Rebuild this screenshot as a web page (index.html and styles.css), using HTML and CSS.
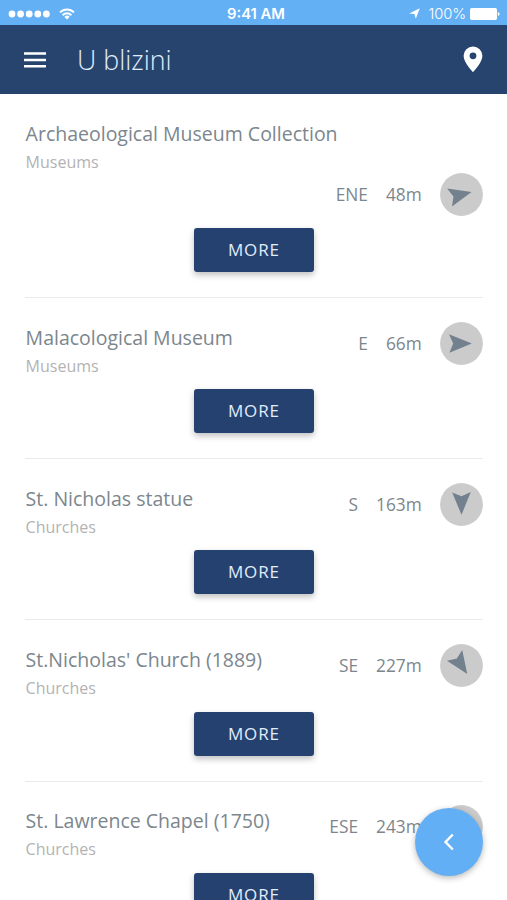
FILE: index.html
```html
<!DOCTYPE html>
<html lang="hr">
<head>
<meta charset="utf-8">
<title>U blizini</title>
<link rel="stylesheet" href="styles.css">
</head>
<body>
<div class="status">
  <div class="status-side">
    <svg class="signal" width="43" height="10" viewBox="0 0 43 10"><g fill="#fff"><circle cx="4" cy="5" r="3.4"/><circle cx="12.6" cy="5" r="3.4"/><circle cx="21.2" cy="5" r="3.4"/><circle cx="29.8" cy="5" r="3.4"/><circle cx="38.4" cy="5" r="3.4"/></g></svg>
    <svg class="wifi" width="16" height="12" viewBox="0 0 16 12"><g fill="none" stroke="#fff" stroke-width="2"><path d="M1.1 4.4a9.8 9.8 0 0 1 13.8 0"/><path d="M3.6 7.2a6.2 6.2 0 0 1 8.8 0"/></g><path fill="#fff" d="M5.4 8.9a3.7 3.7 0 0 1 5.2 0L8 11.6z"/></svg>
  </div>
  <div class="clock">9:41 AM</div>
  <div class="status-side status-right">
    <svg class="loc" width="11" height="11" viewBox="0 0 11 11"><path fill="#fff" d="M10.8.3 6.800 10.800 5.400 6.100.2 5.400z"/></svg>
    <span class="percent">100%</span>
    <svg width="30" height="12" viewBox="0 0 30 12"><rect width="27" height="12" rx="1.8" fill="#fff"/><path fill="#fff" d="M27.8 4q1.8.3 1.8 2t-1.8 2z"/></svg>
  </div>
</div>
<header class="bar">
  <svg width="22" height="16" viewBox="0 0 22 16"><path d="M0 1.5h22M0 8h22M0 14.3h22" stroke="#fff" stroke-width="2.5"/></svg>
  <h1>U blizini</h1>
  <svg width="20" height="27" viewBox="0 0 20 27"><path fill="#fff" fill-rule="evenodd" d="M10 .4A9.4 9.4 0 0 0 .6 9.8C.6 16.9 10 26.2 10 26.2s9.400-9.300 9.400-16.400A9.400 9.400 0 0 0 10 .4zm0 6a3.400 3.400 0 1 1 0 6.800 3.400 3.400 0 0 1 0-6.800z"/></svg>
</header>
<main class="list">
  <article class="item">
    <div class="head wrap">
      <div class="place"><h2>Archaeological Museum Collection</h2><p>Museums</p></div>
      <div class="info"><span class="dir">ENE</span><span class="dist">48m</span><svg class="compass" viewBox="-21.500 -21.500 43 43"><circle r="21.400"/><path class="ene" d="M10.300 0-12.500-9.300-8.300 0-12.100 9.300z"/></svg></div>
    </div>
    <button class="more">MORE</button>
  </article>
  <article class="item">
    <div class="head">
      <div class="place"><h2>Malacological Museum</h2><p>Museums</p></div>
      <div class="info"><span class="dir">E</span><span class="dist">66m</span><svg class="compass" viewBox="-21.500 -21.500 43 43"><circle r="21.400"/><path d="M10.300 0-12.500-9.300-8.300 0-12.100 9.300z"/></svg></div>
    </div>
    <button class="more">MORE</button>
  </article>
  <article class="item">
    <div class="head">
      <div class="place"><h2>St. Nicholas statue</h2><p>Churches</p></div>
      <div class="info"><span class="dir">S</span><span class="dist">163m</span><svg class="compass" viewBox="-21.500 -21.500 43 43"><circle r="21.400"/><path class="s" d="M10.300 0-12.500-9.300-8.300 0-12.100 9.300z"/></svg></div>
    </div>
    <button class="more">MORE</button>
  </article>
  <article class="item">
    <div class="head">
      <div class="place"><h2>St.Nicholas' Church (1889)</h2><p>Churches</p></div>
      <div class="info"><span class="dir">SE</span><span class="dist">227m</span><svg class="compass" viewBox="-21.500 -21.500 43 43"><circle r="21.400"/><path class="se" d="M10.300 0-12.500-9.300-8.300 0-12.100 9.300z"/></svg></div>
    </div>
    <button class="more">MORE</button>
  </article>
  <article class="item">
    <div class="head">
      <div class="place"><h2>St. Lawrence Chapel (1750)</h2><p>Churches</p></div>
      <div class="info"><span class="dir">ESE</span><span class="dist">243m</span><svg class="compass" viewBox="-21.500 -21.500 43 43"><circle r="21.400"/><path class="ese" d="M10.300 0-12.500-9.300-8.300 0-12.100 9.300z"/></svg></div>
    </div>
    <button class="more">MORE</button>
  </article>
</main>
<button class="fab" aria-label="Back"><svg width="12" height="18" viewBox="0 0 12 18"><path d="M9.800 1.500 2.500 9l7.300 7.500" fill="none" stroke="#fff" stroke-width="2.400"/></svg></button>
</body>
</html>
```
FILE: styles.css
```css
* { box-sizing: border-box; margin: 0; padding: 0; }
body {
  height: 900px;
  overflow: hidden;
  display: flex;
  flex-direction: column;
  background: #fff;
  font-family: "Open Sans", sans-serif;
}
svg { display: block; flex: none; }
.status {
  flex: none;
  height: 25px;
  padding: 2px 7px 0 8px;
  display: flex;
  align-items: center;
  background: #64b0f5;
  color: #fff;
  font-family: Inter, sans-serif;
  font-size: 15px;
}
.status-side { flex: 1; display: flex; align-items: center; }
.status-right { justify-content: flex-end; }
.wifi { margin-left: 8px; }
.clock { margin: 0 -2px 0 2px; font-size: 14.800px; font-weight: 600; }
.loc { margin-right: 8px; }
.percent { margin-right: 4px; font-size: 14.800px; font-weight: 300; letter-spacing: -0.100px; }
.bar {
  flex: none;
  height: 69px;
  padding: 0 24px;
  display: flex;
  align-items: center;
  background: #27446f;
  color: #e0edfa;
}
.bar h1 {
  flex: 1;
  margin-left: 31px;
  font-size: 26.800px;
  font-weight: 300;
  line-height: 36px;
}
.list { flex: 1; min-height: 0; overflow: hidden; }
.item {
  margin: 0 24.300px 0 25px;
  padding: 24.300px 0 24.900px;
  display: flex;
  flex-direction: column;
  align-items: center;
  border-bottom: 1px solid #ebebeb;
}
.item:first-child { padding-bottom: 24.700px; }
.head {
  width: 100%;
  margin-bottom: 12px;
  display: flex;
  justify-content: space-between;
}
.wrap { flex-direction: column; }
.place { height: 55px; padding: 0.400px 0 0 0.600px; white-space: nowrap; }
.place h2 {
  color: #7c868d;
  font-size: 19.500px;
  font-weight: 400;
  line-height: 30px;
}
.place p { color: #b3b3b3; font-size: 16px; line-height: 27px; }
.info {
  height: 43px;
  display: flex;
  align-items: center;
  justify-content: flex-end;
  color: #7c868d;
  font-size: 17.300px;
}
.head:not(.wrap) .info { margin-top: -0.500px; }
.dist { margin: 0 18px; }
.compass { width: 43px; height: 43px; }
.compass circle { fill: #cbcbcb; }
.compass path { fill: #73808d; }
.ene { transform: rotate(-14deg); }
.s { transform: rotate(90deg); }
.se { transform: rotate(56deg); }
.ese { transform: rotate(22deg); }
.more {
  flex: none;
  width: 120px;
  height: 44px;
  border: 0;
  border-radius: 3px;
  background: #254170;
  color: #e0edfa;
  font: 400 17px/44px "Open Sans", sans-serif;
  letter-spacing: 0.800px;
  box-shadow: 0 3px 6px rgba(0, 0, 0, 0.250);
}
.fab {
  position: absolute;
  right: 24px;
  bottom: 24px;
  width: 68px;
  height: 68px;
  border: 0;
  border-radius: 50%;
  display: flex;
  align-items: center;
  justify-content: center;
  background: #62aff5;
  box-shadow: 0 2px 6px rgba(0, 0, 0, 0.280);
}
```
